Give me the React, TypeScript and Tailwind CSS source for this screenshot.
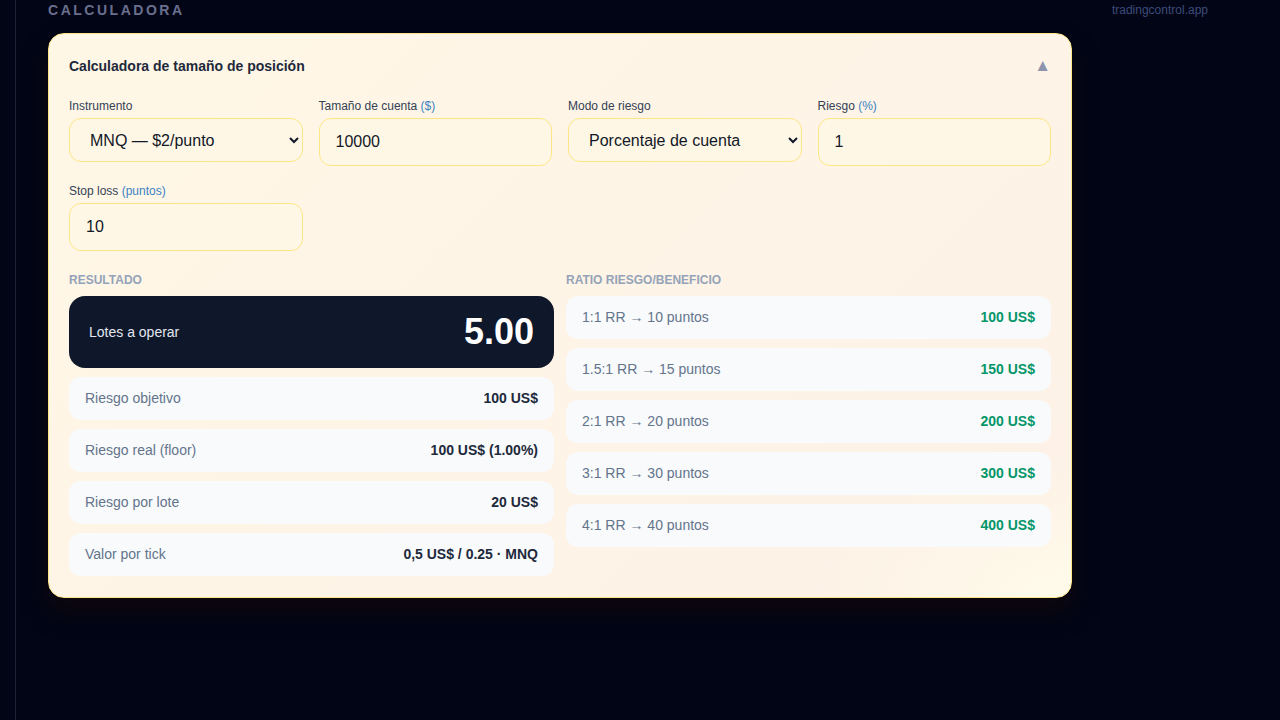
import { useState } from "react";

const ratios = [
  { rr: "1:1", pts: 10, value: "100 US$" },
  { rr: "1.5:1", pts: 15, value: "150 US$" },
  { rr: "2:1", pts: 20, value: "200 US$" },
  { rr: "3:1", pts: 30, value: "300 US$" },
  { rr: "4:1", pts: 40, value: "400 US$" },
];

const results = [
  { label: "Riesgo objetivo", value: "100 US$" },
  { label: "Riesgo real (floor)", value: "100 US$ (1.00%)" },
  { label: "Riesgo por lote", value: "20 US$" },
  { label: "Valor por tick", value: "0,5 US$ / 0.25 · MNQ" },
];

function Label({ text, unit }: { text: string; unit?: string }) {
  return (
    <label className="mb-1 block text-[12px] leading-4 text-[#334155]">
      {text}
      {unit && <span className="text-[#3b82c4]"> {unit}</span>}
    </label>
  );
}

export default function App() {
  const [account, setAccount] = useState("10000");
  const [risk, setRisk] = useState("1");
  const [stop, setStop] = useState("10");

  const inputCls =
    "h-[48px] w-full rounded-xl border border-amber-200 bg-[#fff7e6] px-4 text-[16px] text-[#111827] outline-none";
  const selectCls =
    "h-[44px] w-full rounded-xl border border-amber-200 bg-[#fff7e6] px-4 text-[16px] text-[#111827] outline-none";

  return (
    <div className="flex min-h-screen bg-[#020516] font-['Liberation_Sans',Arial,sans-serif]">
      <div className="w-[15px] shrink-0" />
      <main className="flex-1 border-l border-[#1c2136] pl-[32px]">
        {/* Header */}
        <div className="flex h-[33px] w-[1160px] items-start justify-between">
          <h1 className="text-[14px] font-bold uppercase leading-5 tracking-[0.18em] text-[#6a6f8e]">
            Calculadora
          </h1>
          <span className="text-[12px] leading-5 text-[#3d4b7a]">tradingcontrol.app</span>
        </div>

        {/* Card */}
        <div className="w-[1024px] rounded-2xl border border-amber-200 bg-[radial-gradient(ellipse_at_100%_100%,#fffbea_0%,transparent_18%),linear-gradient(135deg,#fff7e6,#fdf1e7)] px-5 pb-[21px] pt-[22px] shadow-[0_14px_24px_rgba(20,8,8,0.7)]">
          <div className="mb-[22px] flex items-center justify-between">
            <h2 className="text-[14px] font-bold leading-5 text-[#1e293b]">
              Calculadora de tamaño de posición
            </h2>
            <button className="text-[17px] leading-5 text-[#8b93ad]">▲</button>
          </div>

          {/* Inputs */}
          <div className="grid grid-cols-4 gap-x-4 gap-y-[17px]">
            <div>
              <Label text="Instrumento" />
              <select className={selectCls} defaultValue="MNQ">
                <option value="MNQ">MNQ — $2/punto</option>
                <option value="NQ">NQ — $20/punto</option>
                <option value="MES">MES — $5/punto</option>
              </select>
            </div>
            <div>
              <Label text="Tamaño de cuenta" unit="($)" />
              <input className={inputCls} value={account} onChange={(e) => setAccount(e.target.value)} />
            </div>
            <div>
              <Label text="Modo de riesgo" />
              <select className={selectCls} defaultValue="pct">
                <option value="pct">Porcentaje de cuenta</option>
                <option value="fixed">Monto fijo</option>
              </select>
            </div>
            <div>
              <Label text="Riesgo" unit="(%)" />
              <input className={inputCls} value={risk} onChange={(e) => setRisk(e.target.value)} />
            </div>
            <div>
              <Label text="Stop loss" unit="(puntos)" />
              <input className={inputCls} value={stop} onChange={(e) => setStop(e.target.value)} />
            </div>
          </div>

          {/* Results */}
          <div className="mt-[21px] grid grid-cols-2 gap-3">
            <div>
              <p className="mb-2 text-[12px] font-bold uppercase leading-4 text-[#94a3b8]">Resultado</p>
              <div className="flex flex-col gap-[9px]">
                <div className="flex h-[72px] items-center justify-between rounded-2xl bg-[#0f172a] px-5">
                  <span className="text-[14px] text-[#e2e8f0]">Lotes a operar</span>
                  <span className="text-[36px] font-bold text-white">5.00</span>
                </div>
                {results.map((r) => (
                  <div
                    key={r.label}
                    className="flex h-[43px] items-center justify-between rounded-xl bg-[#f8fafc] px-4 text-[14px]"
                  >
                    <span className="text-[#64748b]">{r.label}</span>
                    <span className="font-bold text-[#1e293b]">{r.value}</span>
                  </div>
                ))}
              </div>
            </div>
            <div>
              <p className="mb-2 text-[12px] font-bold uppercase leading-4 text-[#94a3b8]">
                Ratio riesgo/beneficio
              </p>
              <div className="flex flex-col gap-[9px]">
                {ratios.map((r) => (
                  <div
                    key={r.rr}
                    className="flex h-[43px] items-center justify-between rounded-xl bg-[#f8fafc] px-4 text-[14px]"
                  >
                    <span className="text-[#64748b]">
                      {r.rr} RR → {r.pts} puntos
                    </span>
                    <span className="font-bold text-[#059669]">{r.value}</span>
                  </div>
                ))}
              </div>
            </div>
          </div>
        </div>
      </main>
    </div>
  );
}
